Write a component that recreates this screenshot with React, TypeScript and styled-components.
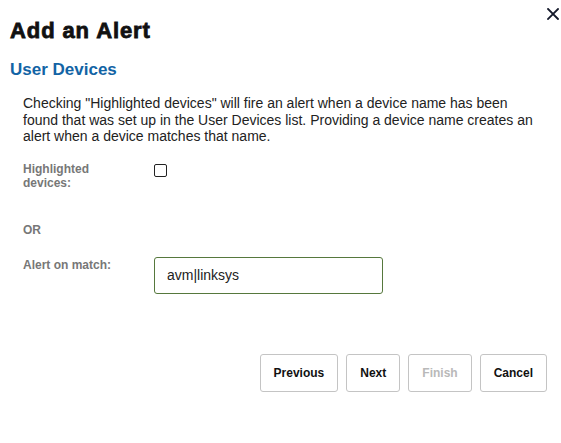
import React from "react";
import styled, { createGlobalStyle } from "styled-components";

const Global = createGlobalStyle`
  html, body { margin: 0; padding: 0; background: #fff; }
  body { font-family: "Liberation Sans", Arial, sans-serif; }
  * { box-sizing: border-box; }
`;

const Dialog = styled.div`
  position: relative;
  width: 561px;
  height: 443px;
  padding: 0 14px 0 10px;
  display: flex;
  flex-direction: column;
`;

const Close = styled.button`
  position: absolute;
  top: 8px;
  right: 2px;
  width: 12px;
  height: 12px;
  padding: 0;
  border: 0;
  background: none;
  display: flex;
  cursor: pointer;
`;

const Title = styled.h1`
  margin: 18px 0 0;
  font-size: 22px;
  line-height: 26px;
  font-weight: 900;
  letter-spacing: 0.9px;
  color: #111;
  -webkit-text-stroke: 0.8px #111;
`;

const SectionTitle = styled.h2`
  margin: 16px 0 0;
  font-size: 17px;
  line-height: 20px;
  font-weight: 700;
  color: #1264a5;
`;

const Description = styled.p`
  margin: 15px 0 0;
  padding: 0 6px 0 13px;
  font-size: 14px;
  line-height: 16.5px;
  color: #222;
`;

const Row = styled.div<{ $top: number }>`
  display: flex;
  align-items: flex-start;
  margin-top: ${(p) => p.$top}px;
  padding-left: 13px;
`;

const Label = styled.label<{ $pad?: number }>`
  width: 131px;
  flex: none;
  padding-top: ${(p) => p.$pad ?? 0}px;
  font-size: 12px;
  line-height: 14px;
  font-weight: 700;
  color: #777;
`;

const Or = styled.div`
  margin-top: 33px;
  padding-left: 13px;
  font-size: 12px;
  line-height: 14px;
  font-weight: 700;
  color: #777;
`;

const Check = styled.input`
  appearance: none;
  margin: 2px 0 0;
  width: 13px;
  height: 13px;
  border: 1.5px solid #222;
  border-radius: 2px;
  background: #fff;
`;

const TextInput = styled.input`
  width: 229px;
  height: 37px;
  margin: 0;
  padding: 0 12px;
  border: 1px solid #56783d;
  border-radius: 3px;
  font-family: "Liberation Sans", Arial, sans-serif;
  font-size: 14px;
  color: #222;
  outline: none;
`;

const Buttons = styled.div`
  display: flex;
  justify-content: flex-end;
  gap: 8px;
  margin-top: 60px;
`;

const Button = styled.button<{ $disabled?: boolean }>`
  height: 38px;
  padding: 0 13px;
  border: 1px solid #c4c4c4;
  border-radius: 3px;
  background: #fff;
  font-family: "Liberation Sans", Arial, sans-serif;
  font-size: 12px;
  font-weight: 700;
  color: ${(p) => (p.$disabled ? "#b9b9b9" : "#111")};
  cursor: ${(p) => (p.$disabled ? "default" : "pointer")};
`;

export default function App() {
  return (
    <>
      <Global />
      <Dialog>
        <Close aria-label="Close">
          <svg width="12" height="12" viewBox="0 0 12 12">
            <path d="M1 1L11 11M11 1L1 11" stroke="#14192a" strokeWidth="1.8" strokeLinecap="square" />
          </svg>
        </Close>
        <Title>Add an Alert</Title>
        <SectionTitle>User Devices</SectionTitle>
        <Description>
          Checking "Highlighted devices" will fire an alert when a device name has been
          found that was set up in the User Devices list. Providing a device name creates an
          alert when a device matches that name.
        </Description>
        <Row $top={17}>
          <Label>
            Highlighted
            <br />
            devices:
          </Label>
          <Check type="checkbox" />
        </Row>
        <Or>OR</Or>
        <Row $top={20}>
          <Label $pad={1}>Alert on match:</Label>
          <TextInput defaultValue="avm|linksys" />
        </Row>
        <Buttons>
          <Button>Previous</Button>
          <Button>Next</Button>
          <Button $disabled>Finish</Button>
          <Button>Cancel</Button>
        </Buttons>
      </Dialog>
    </>
  );
}
